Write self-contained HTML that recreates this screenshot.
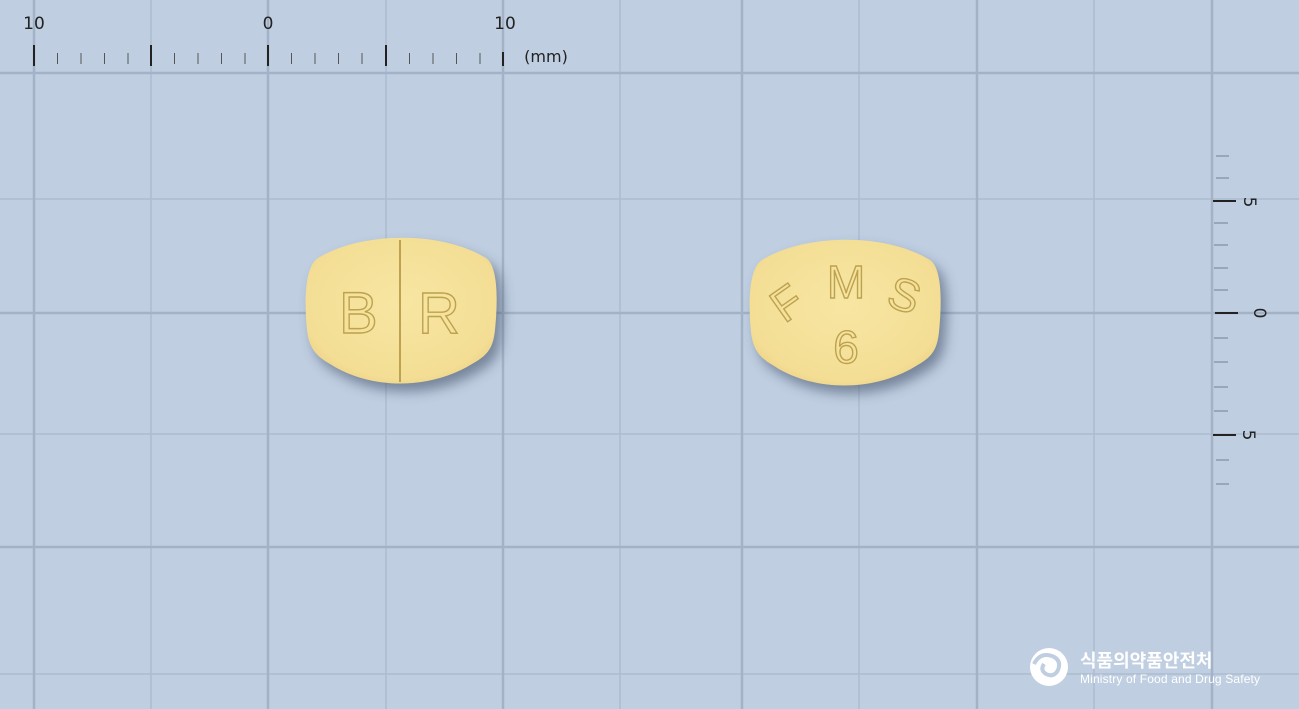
<!DOCTYPE html>
<html><head><meta charset="utf-8"><style>
html,body{margin:0;padding:0;background:#bfcee1;width:1299px;height:709px;overflow:hidden}
svg{display:block}
</style></head><body>
<svg width="1299" height="709" viewBox="0 0 1299 709" xmlns="http://www.w3.org/2000/svg">
<defs>
<filter id="sh" x="-20%" y="-20%" width="150%" height="160%"><feGaussianBlur stdDeviation="6"/></filter>
<radialGradient id="pg" cx="50%" cy="45%" r="60%"><stop offset="0" stop-color="#f7e6a2"/><stop offset="0.85" stop-color="#f4de95"/><stop offset="1" stop-color="#ecd487"/></radialGradient>
<path id="pill" d="M318 258 C360 232 440 230 486 258 C498 266 498 300 495 330 C493 350 486 356 472 364 C430 390 370 390 330 364 C316 356 309 348 307 330 C304 300 305 266 318 258 Z"/>
</defs>
<rect width="1299" height="709" fill="#bfcee1"/>
<g stroke="#adbccf" stroke-width="1.5">
<line x1="151" y1="0" x2="151" y2="709"/><line x1="386" y1="0" x2="386" y2="709"/><line x1="620" y1="0" x2="620" y2="709"/><line x1="859" y1="0" x2="859" y2="709"/><line x1="1094" y1="0" x2="1094" y2="709"/>
<line x1="0" y1="199" x2="1299" y2="199"/><line x1="0" y1="434" x2="1299" y2="434"/><line x1="0" y1="674" x2="1299" y2="674"/>
</g>
<g stroke="#a3b2c6" stroke-width="2.5">
<line x1="34" y1="0" x2="34" y2="709"/><line x1="268" y1="0" x2="268" y2="709"/><line x1="503" y1="0" x2="503" y2="709"/><line x1="742" y1="0" x2="742" y2="709"/><line x1="977" y1="0" x2="977" y2="709"/><line x1="1212" y1="0" x2="1212" y2="709"/>
<line x1="0" y1="73" x2="1299" y2="73"/><line x1="0" y1="313" x2="1299" y2="313"/><line x1="0" y1="547" x2="1299" y2="547"/>
</g>
<g stroke="#222" stroke-width="2">
<line x1="34" y1="45" x2="34" y2="66"/><line x1="151" y1="45" x2="151" y2="66"/><line x1="268" y1="45" x2="268" y2="66"/><line x1="386" y1="45" x2="386" y2="66"/><line x1="503" y1="52" x2="503" y2="66"/>
</g>
<g stroke="#555" stroke-width="1">
<line x1="57.5" y1="53" x2="57.5" y2="64"/><line x1="81" y1="53" x2="81" y2="64"/><line x1="104.5" y1="53" x2="104.5" y2="64"/><line x1="128" y1="53" x2="128" y2="64"/>
<line x1="174.5" y1="53" x2="174.5" y2="64"/><line x1="198" y1="53" x2="198" y2="64"/><line x1="221.5" y1="53" x2="221.5" y2="64"/><line x1="245" y1="53" x2="245" y2="64"/>
<line x1="291.5" y1="53" x2="291.5" y2="64"/><line x1="315" y1="53" x2="315" y2="64"/><line x1="338.5" y1="53" x2="338.5" y2="64"/><line x1="362" y1="53" x2="362" y2="64"/>
<line x1="409.5" y1="53" x2="409.5" y2="64"/><line x1="433" y1="53" x2="433" y2="64"/><line x1="456.5" y1="53" x2="456.5" y2="64"/><line x1="480" y1="53" x2="480" y2="64"/>
</g>
<g font-family="DejaVu Sans, sans-serif" font-size="17" fill="#222" text-anchor="middle">
<text x="34" y="29">10</text><text x="268" y="29">0</text><text x="505" y="29">10</text>
<text x="546" y="62" font-size="16">(mm)</text>
</g>
<g stroke="#8d9aab" stroke-width="1.5">
<line x1="1216" y1="156" x2="1229" y2="156"/><line x1="1216" y1="178" x2="1229" y2="178"/>
<line x1="1214" y1="223" x2="1228" y2="223"/><line x1="1214" y1="245" x2="1228" y2="245"/><line x1="1214" y1="268" x2="1228" y2="268"/><line x1="1214" y1="290" x2="1228" y2="290"/>
<line x1="1214" y1="338" x2="1228" y2="338"/><line x1="1214" y1="362" x2="1228" y2="362"/><line x1="1214" y1="387" x2="1228" y2="387"/><line x1="1214" y1="411" x2="1228" y2="411"/>
<line x1="1216" y1="460" x2="1229" y2="460"/><line x1="1216" y1="484" x2="1229" y2="484"/>
</g>
<g stroke="#222" stroke-width="2">
<line x1="1213" y1="201" x2="1236" y2="201"/><line x1="1215" y1="313" x2="1238" y2="313"/><line x1="1213" y1="435" x2="1236" y2="435"/>
</g>
<g font-family="DejaVu Sans, sans-serif" font-size="17" fill="#222" text-anchor="middle">
<text transform="translate(1244,202) rotate(90)">5</text>
<text transform="translate(1254,313) rotate(90)">0</text>
<text transform="translate(1243,435) rotate(90)">5</text>
</g>
<!-- left pill -->
<use href="#pill" fill="#3a4a60" opacity="0.55" filter="url(#sh)" transform="translate(6,8)"/>
<use href="#pill" fill="url(#pg)"/>
<line x1="400" y1="240" x2="400" y2="382" stroke="#bda250" stroke-width="2"/>
<g font-family="Liberation Sans, sans-serif" font-size="58" fill="none" stroke="#bda250" stroke-width="1.4">
<text x="339" y="333">B</text><text x="418" y="333">R</text>
</g>
<!-- right pill -->
<use href="#pill" fill="#3a4a60" opacity="0.55" filter="url(#sh)" transform="translate(450,10)"/>
<use href="#pill" fill="url(#pg)" transform="translate(444,2)"/>
<g font-family="Liberation Sans, sans-serif" font-size="46" fill="none" stroke="#bda250" stroke-width="1.4" text-anchor="middle">
<text transform="translate(796,316) rotate(-35)">F</text>
<text x="846" y="298">M</text>
<text transform="translate(899,310) rotate(20)">S</text>
<text x="846" y="363">6</text>
</g>
<!-- logo -->
<circle cx="1049" cy="667" r="19" fill="#ffffff"/>
<path d="M1034 664 Q1040 652 1052 656 Q1062 660 1058 670 Q1054 678 1046 674 Q1040 670 1044 664" fill="none" stroke="#bfcee1" stroke-width="4"/>
<g fill="#ffffff" font-family="Liberation Sans, 'Noto Sans CJK KR', sans-serif">
<text x="1080" y="667" font-size="18" font-weight="bold" font-family="'Noto Sans CJK KR', sans-serif">식품의약품안전처</text>
<text x="1080" y="683" font-size="12" textLength="180">Ministry of Food and Drug Safety</text>
</g>
</svg>
</body></html>
